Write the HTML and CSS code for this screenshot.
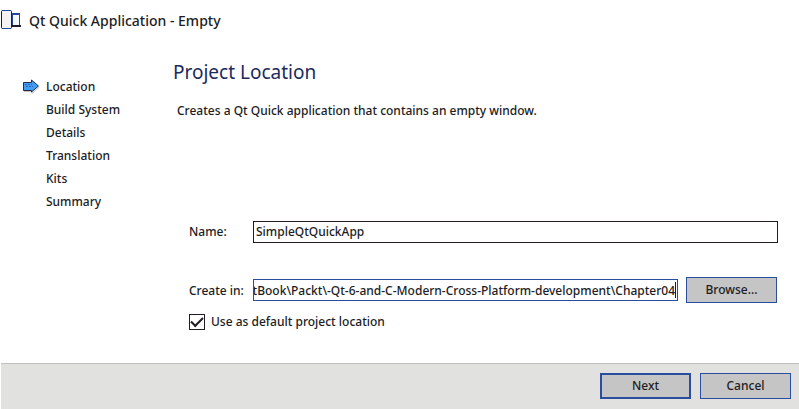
FILE: index.html
```html
<!DOCTYPE html>
<html lang="en">
<head>
<meta charset="utf-8">
<title>Qt Quick Application - Empty</title>
<link rel="stylesheet" href="styles.css">
</head>
<body>
<form class="wizard">
  <header class="titlebar">
    <svg class="app-icon" width="20" height="20" viewBox="0 0 20 20" aria-hidden="true">
      <path d="M11.500 3.500H18.500V15.500H11.500z" fill="#f4f7fb" stroke="#24479b"/>
      <path d="M11 4H19" stroke="#24479b" stroke-width="2"/>
      <path d="M11 16H20" stroke="#211c2b" stroke-width="2"/>
      <rect x="0.500" y="0.500" width="10" height="18" rx="1" fill="#f3f3f3" stroke="#211c2b"/>
      <path d="M1 .5H10M1 18.500H10" stroke="#24479b"/>
    </svg>
    <span>Qt Quick Application - Empty</span>
  </header>
  <div class="content">
    <ol class="steps">
      <li class="current" aria-current="step">
        <svg class="arrow" width="17" height="15" viewBox="0 0 17 15" aria-hidden="true">
          <path d="M1 12.500H9V14.500L16.500 8" fill="none" stroke="#c4c4c4"/>
          <path d="M.5 3.500H8.500V1L15.500 7L8.500 13V11.500H.5z" fill="#439df0" stroke="#222a4c"/>
          <path d="M2 5.500H9M3 7.500H10" stroke="#2763bd" stroke-dasharray="2 1"/>
        </svg>Location</li>
      <li>Build System</li>
      <li>Details</li>
      <li>Translation</li>
      <li>Kits</li>
      <li>Summary</li>
    </ol>
    <main class="page">
      <h1>Project Location</h1>
      <p>Creates a Qt Quick application that contains an empty window.</p>
      <div class="fields">
        <div class="row">
          <label for="name">Name:</label>
          <div class="box"><input id="name" type="text" value="SimpleQtQuickApp"></div>
        </div>
        <div class="row path-row">
          <label for="path">Create in:</label>
          <div class="box active"><input id="path" type="text" value="tBook\Packt\-Qt-6-and-C-Modern-Cross-Platform-development\Chapter04"><span class="caret"></span></div>
          <button type="button">Browse...</button>
        </div>
        <label class="check"><input type="checkbox" checked>Use as default project location</label>
      </div>
    </main>
  </div>
  <footer class="actions">
    <button type="submit" class="primary">Next</button>
    <button type="button">Cancel</button>
  </footer>
</form>
</body>
</html>
```
FILE: styles.css
```css
* { box-sizing: border-box; }
body {
  margin: 0;
  background: #fff;
  color: #211c24;
  font: 500 12px/23px "Noto Sans", "Open Sans", sans-serif;
}
.wizard {
  min-height: 100vh;
  display: flex;
  flex-direction: column;
}
.titlebar {
  display: flex;
  align-items: center;
  gap: 8px;
  height: 40px;
  padding-left: 1px;
  font-size: 14px;
}
.app-icon, .arrow { display: block; flex: none; }
.content {
  flex: 1;
  display: flex;
  padding: 20px 21px 0 23px;
}
.steps {
  flex: none;
  width: 150px;
  margin: 0;
  padding: 15px 0 0 23px;
  list-style: none;
}
.current { display: flex; align-items: center; }
.arrow { margin-left: -23px; margin-right: 6px; }
.page { flex: 1; min-width: 0; }
h1 {
  margin: 0;
  color: #1b2b5c;
  font-size: 19px;
  font-weight: 400;
  line-height: 24px;
}
p { margin: 15px 0 0 4px; }
.fields { padding: 98px 0 0 16px; }
.row { display: flex; align-items: center; }
.row label { flex: none; width: 64px; }
.path-row { margin: 34px 1px 7px 0; }
.box {
  flex: 1;
  min-width: 0;
  display: flex;
  align-items: center;
  height: 22px;
  border: 1px solid #211c24;
}
.box input {
  flex: 1;
  min-width: 0;
  height: 20px;
  padding: 0 0 0 2px;
  border: 0;
  outline: 0;
  background: none;
  color: inherit;
  font: inherit;
}
.active { border-color: #2b4da0; overflow: hidden; }
.active input { margin-left: -2px; padding: 0; text-align: right; }
.caret { width: 1px; height: 16px; margin-right: 1px; background: #211c24; }
button {
  width: 91px;
  height: 26px;
  padding: 0;
  border: 1px solid #2b4da0;
  background: #c5c5c5;
  color: inherit;
  font: inherit;
  line-height: 20px;
}
.path-row button { margin-left: 8px; }
.primary { border-width: 2px; }
.check { display: flex; align-items: center; gap: 6px; }
.check input {
  appearance: none;
  width: 16px;
  height: 16px;
  margin: 0;
  border: 1px solid #211c24;
  display: grid;
  place-items: center;
}
.check input:checked::before {
  content: "";
  width: 10px;
  height: 5px;
  border: solid #211c24;
  border-width: 0 0 2px 2px;
  transform: translateY(-1px) rotate(-45deg);
}
.actions {
  display: flex;
  justify-content: flex-end;
  gap: 9px;
  height: 46px;
  margin-left: 1px;
  padding: 9px 8px 0;
  border-top: 1px solid #c0c0c0;
  background: #e1e1e0;
}
```
